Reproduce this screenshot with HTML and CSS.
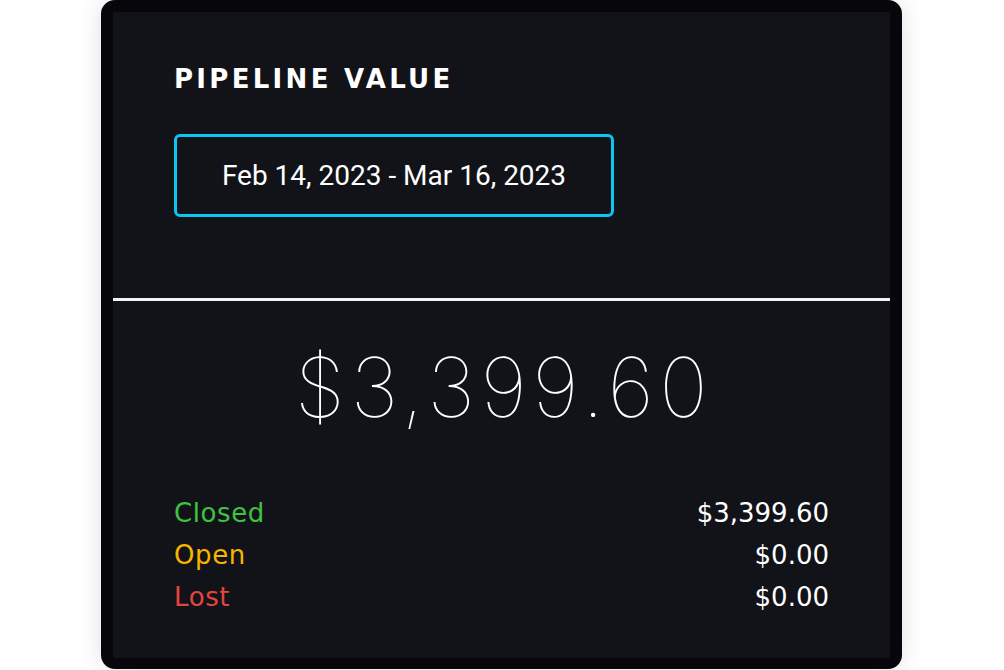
FILE: index.html
```html
<!DOCTYPE html>
<html>
<head>
<meta charset="utf-8">
<link rel="stylesheet" href="styles.css">
</head>
<body>
<div class="card">
  <div class="top">
    <h1 class="title">PIPELINE VALUE</h1>
    <div class="range">Feb 14, 2023 - Mar 16, 2023</div>
  </div>
  <div class="divider"></div>
  <div class="bottom">
    <div class="total">$3,399.60</div>
    <div class="rows">
      <div class="row"><span class="label closed">Closed</span><span class="val">$3,399.60</span></div>
      <div class="row"><span class="label open">Open</span><span class="val">$0.00</span></div>
      <div class="row"><span class="label lost">Lost</span><span class="val">$0.00</span></div>
    </div>
  </div>
</div>
</body>
</html>
```

FILE: styles.css
```css
html, body {
  margin: 0;
  padding: 0;
  background: #ffffff;
  width: 1004px;
  height: 670px;
  overflow: hidden;
}
body {
  padding-left: 101px;
  box-sizing: border-box;
}
.card {
  width: 801px;
  height: 669px;
  box-sizing: border-box;
  border: 12px solid #06060b;
  border-bottom-width: 11px;
  border-radius: 14px;
  background: #121318;
  box-shadow: 0 0 24px rgba(0, 0, 0, 0.12);
  color: #ffffff;
  font-family: "DejaVu Sans", "Lato", sans-serif;
}
.top {
  padding: 52px 61px 81px;
}
.title {
  margin: 0;
  font-size: 26px;
  line-height: 30px;
  font-weight: 700;
  letter-spacing: 3.3px;
  color: #ffffff;
}
.range {
  margin-top: 40px;
  width: 440px;
  height: 83px;
  box-sizing: border-box;
  border: 3px solid #0ac6f0;
  border-radius: 6px;
  display: flex;
  align-items: center;
  justify-content: center;
  font-family: "Roboto", "Liberation Sans", sans-serif;
  font-size: 28px;
  color: #ffffff;
}
.divider {
  height: 3px;
  background: #f3f4f8;
}
.bottom {
  padding: 39px 61px 0;
}
.total {
  text-align: center;
  font-family: "Inter", "Lato", sans-serif;
  font-weight: 100;
  font-size: 82px;
  line-height: 96px;
  letter-spacing: 5.5px;
  padding-left: 5px;
}
.rows {
  margin-top: 56px;
}
.row {
  display: flex;
  justify-content: space-between;
  font-size: 26px;
  line-height: 42px;
}
.label {
  letter-spacing: 0.6px;
}
.closed { color: #3ec43e; }
.open { color: #f8b500; }
.lost { color: #e5443c; }
.val { color: #ffffff; }
```
